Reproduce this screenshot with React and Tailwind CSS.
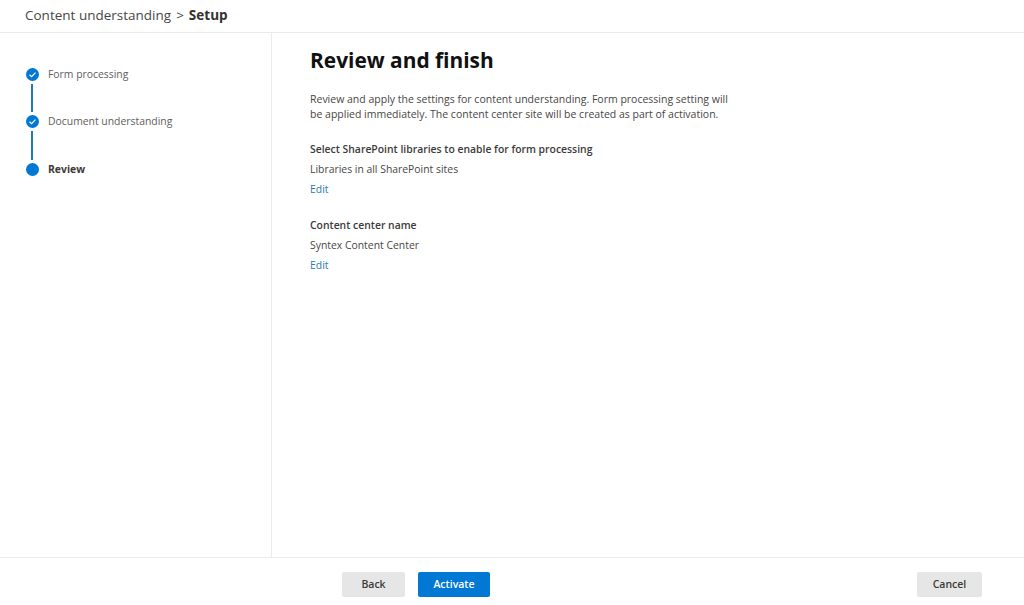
function Check() {
  return (
    <svg viewBox="0 0 13 13" className="w-[13px] h-[13px] shrink-0">
      <circle cx="6.5" cy="6.5" r="6.5" fill="#0078d4" />
      <path d="M3.5 6.7 L5.6 8.7 L9.5 4.7" fill="none" stroke="#fff" strokeWidth="1.2" />
    </svg>
  );
}
function Section({ title, value }) {
  return (
    <div className="flex flex-col">
      <div className="h-[20px] leading-[20px] text-[10.4px] font-semibold text-[#3b3a39]">{title}</div>
      <div className="h-[20px] leading-[20px] text-[10.4px] text-[#484644]">{value}</div>
      <div className="h-[20px] leading-[20px] text-[10.4px] text-[#2b7cb3]">Edit</div>
    </div>
  );
}
export default function App() {
  return (
    <div className="w-[1024px] h-[605px] bg-white flex flex-col overflow-hidden font-['Open_Sans',sans-serif]">
      <header className="h-[33px] shrink-0 border-b border-[#edebe9] pl-[25px] flex items-center pb-[2px] text-[13.5px] text-[#484644]">
        <span>Content understanding</span>
        <span className="ml-[5px]">&gt;</span>
        <span className="ml-[5px] font-bold text-[#323130]">Setup</span>
      </header>
      <div className="flex-1 flex min-h-0">
        <aside className="w-[272px] shrink-0 border-r border-[#edebe9] pl-[25.5px] pt-[34.5px] text-[10.4px]">
          <div className="flex items-center gap-[9.5px] h-[13px]">
            <Check />
            <span className="pt-[2px] text-[#605e5c] whitespace-nowrap">Form processing</span>
          </div>
          <div className="w-[2px] h-[28.5px] ml-[5.5px] my-[3px] bg-[#1f7ab8]" />
          <div className="flex items-center gap-[9.5px] h-[13px]">
            <Check />
            <span className="pt-[1px] text-[#605e5c] whitespace-nowrap">Document understanding</span>
          </div>
          <div className="w-[2px] h-[28.5px] ml-[5.5px] my-[3px] bg-[#1f7ab8]" />
          <div className="flex items-center gap-[9.5px] h-[13px]">
            <div className="w-[13px] h-[13px] rounded-full bg-[#0078d4] shrink-0" />
            <span className="pt-[2px] font-bold text-[#3b3a39]">Review</span>
          </div>
        </aside>
        <main className="flex-1 pl-[38px] pt-[11px]">
          <h1 className="text-[20.9px] leading-[32px] font-bold text-[#111]">Review and finish</h1>
          <p className="mt-[16px] w-[425px] text-[10.5px] leading-[15px] text-[#484644]">
            Review and apply the settings for content understanding. Form processing setting will be applied immediately. The content center site will be created as part of activation.
          </p>
          <div className="mt-[17px] flex flex-col gap-[16px]">
            <Section title="Select SharePoint libraries to enable for form processing" value="Libraries in all SharePoint sites" />
            <Section title="Content center name" value="Syntex Content Center" />
          </div>
        </main>
      </div>
      <footer className="h-[48px] shrink-0 border-t border-[#edebe9] flex items-start pt-[14px] text-[10.5px] font-semibold">
        <button className="ml-[342px] w-[63px] h-[25px] rounded-[2px] bg-[#e6e6e6] text-[#3b3a39]">Back</button>
        <button className="ml-[13px] w-[72px] h-[25px] rounded-[2px] bg-[#0078d4] text-white">Activate</button>
        <button className="ml-[427px] w-[65px] h-[25px] rounded-[2px] bg-[#e6e6e6] text-[#3b3a39]">Cancel</button>
      </footer>
    </div>
  );
}
